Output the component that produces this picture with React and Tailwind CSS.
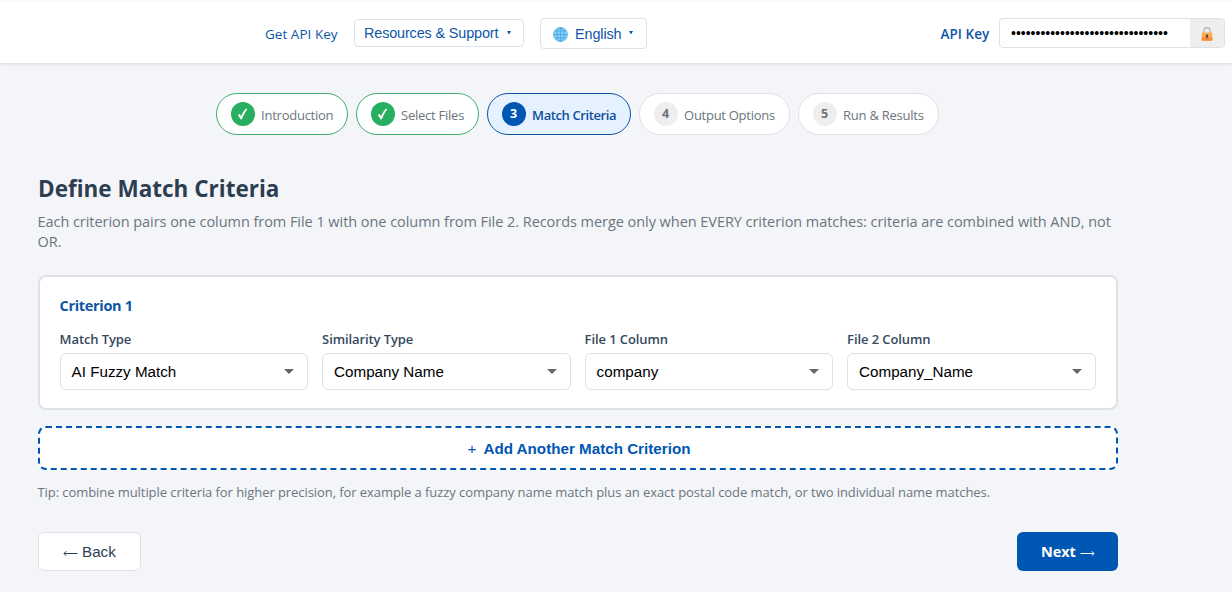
import React from 'react';

const ui = "font-['Open_Sans','Noto_Sans',sans-serif]";
const arial = "font-['Liberation_Sans',Arial,sans-serif]";

function Globe() {
  return (
    <svg className="h-[15px] w-[15px]" viewBox="0 0 15 15" fill="none">
      <circle cx="7.5" cy="7.5" r="7" fill="#7fd0fa" stroke="#4eaadd" strokeWidth="0.7" />
      <path d="M7.5 .5v14M.5 7.5h14M1.8 4h11.4M1.8 11h11.4" stroke="#459fd6" strokeWidth="0.7" />
      <ellipse cx="7.5" cy="7.5" rx="3.6" ry="7" stroke="#459fd6" strokeWidth="0.7" />
    </svg>
  );
}

function Lock() {
  return (
    <svg className="h-[14px] w-[12px]" viewBox="0 0 12 14" fill="none">
      <path d="M3 6.5V3.6a3 3 0 0 1 6 0v2.9" stroke="#b4b4b8" strokeWidth="1.3" />
      <rect x="0.7" y="5.5" width="10.6" height="8.2" rx="0.8" fill="#f9b055" />
      <path d="M0.7 10h10.6v2.9a.8.8 0 0 1-.8.8h-9a.8.8 0 0 1-.8-.8z" fill="#f69140" />
      <circle cx="6" cy="8.7" r="1.3" fill="#53402f" />
      <path d="M6 9v2.6" stroke="#53402f" strokeWidth="1.1" />
    </svg>
  );
}

function Caret({ className }) {
  return (
    <svg className={className} viewBox="0 0 10 5" preserveAspectRatio="none">
      <path d="M0 0h10L5 5z" fill="currentColor" />
    </svg>
  );
}

function Check() {
  return (
    <svg className="h-[12px] w-[11px]" viewBox="0 0 11 12">
      <path d="M.8 7.2 2.5 5.8 4.1 8.2C5.4 5.2 7 2.7 8.9.8L10.4 1C8.2 4 6.4 7.2 4.9 11.2H3.4C2.7 9.6 1.8 8.3.8 7.2z" fill="#fff" />
    </svg>
  );
}

const steps = [
  { label: 'Introduction', state: 'done', width: 'w-[132px]', tracking: 'tracking-[-0.25px]' },
  { label: 'Select Files', state: 'done', width: 'w-[123px]', tracking: 'tracking-[-0.25px]' },
  { label: 'Match Criteria', state: 'active', width: 'w-[144px]', tracking: 'tracking-[-0.4px]' },
  { label: 'Output Options', state: 'todo', width: 'w-[151px]', tracking: 'tracking-[-0.28px]' },
  { label: 'Run & Results', state: 'todo', width: 'w-[141px]', tracking: 'tracking-[-0.25px]' },
];

const pill = {
  done: 'border-[#3fae70] bg-white text-[#6c757d]',
  active: 'border-[#0f55a5] bg-[#e6f1ff] text-[#0d4f9e] font-semibold',
  todo: 'border-[#dee2e6] bg-white text-[#6c757d]',
};

const badge = {
  done: 'bg-[#27ae60] text-white',
  active: 'bg-[#0056b3] text-white',
  todo: 'bg-[#eeeeee] text-[#6c757d]',
};

const fields = [
  { label: 'Match Type', value: 'AI Fuzzy Match' },
  { label: 'Similarity Type', value: 'Company Name' },
  { label: 'File 1 Column', value: 'company' },
  { label: 'File 2 Column', value: 'Company_Name' },
];

export default function App() {
  return (
    <div className={`h-[592px] w-[1232px] overflow-hidden bg-[#f3f5f9] ${ui}`}>
      <header className="flex h-[63px] items-start border-t-2 border-[#fbfbfb] bg-white pr-[7px] pl-[265px] text-[#0d56a6] shadow-[0_1px_3px_rgba(0,0,0,0.12)]">
        <a className="mt-[21px] w-[89px] text-[13.5px] leading-[22px] tracking-[0.03px] whitespace-nowrap">Get API Key</a>
        <button className={`mt-[17px] flex h-[28px] w-[170px] items-center rounded-[4px] border border-[#dee2e6] pt-[2px] pl-[9px] text-[14.4px] tracking-[-0.13px] whitespace-nowrap ${arial}`}>
          Resources &amp; Support
          <Caret className="mb-[2px] ml-[9px] h-[3.5px] w-[4px]" />
        </button>
        <button className={`mt-[16px] ml-4 flex h-[31px] w-[107px] items-center rounded-[4px] border border-[#dee2e6] pt-px pl-[12px] text-[14.4px] tracking-[-0.1px] ${arial}`}>
          <Globe />
          <span className="ml-[7px] pt-px">English</span>
          <Caret className="mb-[3px] ml-[7.5px] h-[3.5px] w-[4px]" />
        </button>
        <label className="mt-[21px] ml-auto w-[58.5px] text-[13.5px] leading-[22px] font-semibold tracking-[0.05px] whitespace-nowrap">API Key</label>
        <div className="mt-[16px] flex h-[30px] w-[226px] overflow-hidden rounded-[4px] border border-[#dee2e6]">
          <input
            type="password"
            readOnly
            value="00000000000000000000000000000000"
            className={`min-w-0 flex-1 pl-[11px] text-[14px] text-black outline-none ${arial}`}
          />
          <span className="flex w-[34px] items-center justify-center bg-[#eeeeee] pt-[2px]">
            <Lock />
          </span>
        </div>
      </header>

      <main className="ml-[38px] w-[1080px] pt-[30px]">
        <nav className="flex justify-center gap-2 pr-[2px]">
          {steps.map((s, i) => (
            <div key={s.label} className={`flex h-[42px] items-center rounded-full border pl-[14px] text-[13px] whitespace-nowrap ${s.width} ${pill[s.state]}`}>
              <span className={`mr-[6.6px] flex h-6 w-6 shrink-0 items-center justify-center rounded-full text-[12.5px] font-bold ${badge[s.state]}`}>
                {s.state === 'done' ? <Check /> : i + 1}
              </span>
              <span className={`pt-[3px] ${s.tracking}`}>{s.label}</span>
            </div>
          ))}
        </nav>

        <h1 className="mt-[38px] text-[22.5px] leading-[32px] font-bold text-[#2c3e50]">Define Match Criteria</h1>
        <p className="mt-[7px] -ml-[0.5px] text-[14.5px] leading-[20px] tracking-[-0.05px] text-[#6c757d]">
          <span className="block whitespace-nowrap">Each criterion pairs one column from File 1 with one column from File 2. Records merge only when EVERY criterion matches: criteria are combined with AND, not</span>
          <span className="block">OR.</span>
        </p>

        <section className="mt-[23px] h-[135px] rounded-[8px] border-2 border-[#dee2e6] bg-white pt-[18px] pr-[20.4px] pl-[19.6px]">
          <h2 className="text-[14.5px] leading-[22px] font-bold tracking-[-0.33px] text-[#0d56a6]">Criterion 1</h2>
          <div className="mt-[12px] grid grid-cols-4 gap-[14px]">
            {fields.map((f) => (
              <div key={f.label}>
                <div className="h-[24px] text-[13px] leading-[20px] font-semibold tracking-[-0.1px] text-[#34495e]">{f.label}</div>
                <div className={`flex h-[37px] items-center justify-between rounded-[6px] border border-[#dee2e6] pr-[13px] pl-[11px] text-[15.2px] text-black ${arial}`}>
                  <span className="pt-[2px]">{f.value}</span>
                  <Caret className="h-[5px] w-[10px] text-[#666666]" />
                </div>
              </div>
            ))}
          </div>
        </section>

        <button className={`mt-4 flex h-[44px] w-full items-center justify-center gap-[7px] rounded-[8px] border-2 border-dashed border-[#0056b3] bg-white pt-[2px] pl-[2px] text-[15.2px] font-bold text-[#0056b3] ${arial}`}>
          <span className="font-normal">+</span>
          <span>Add Another Match Criterion</span>
        </button>
        <p className="mt-[12px] -ml-[0.5px] text-[13px] leading-[20px] tracking-[-0.07px] whitespace-nowrap text-[#6c757d]">
          Tip: combine multiple criteria for higher precision, for example a fuzzy company name match plus an exact postal code match, or two individual name matches.
        </p>

        <div className="mt-[30px] flex justify-between">
          <button className={`flex h-[39px] w-[103px] items-center rounded-[6px] border border-[#dee2e6] bg-white pt-[2px] pl-[24px] text-[15.2px] text-[#2c3e50] ${arial}`}>
            <svg className="mt-[2px] mr-[4px] h-[7px] w-[15px]" viewBox="0 0 15 7" fill="none" stroke="currentColor"><path d="M14.5 3.5H1M3.2 1.3 1 3.5l2.2 2.2" /></svg>
            Back
          </button>
          <button className="flex h-[39px] w-[101px] items-center rounded-[6px] bg-[#0056b3] pl-[24px] text-[14.5px] font-bold tracking-[-0.1px] text-white">
            Next
            <svg className="mt-[4px] ml-[4px] h-[7px] w-[15px]" viewBox="0 0 15 7" fill="none" stroke="currentColor"><path d="M.5 3.5H14M11.8 1.3 14 3.5l-2.2 2.2" /></svg>
          </button>
        </div>
      </main>
    </div>
  );
}
